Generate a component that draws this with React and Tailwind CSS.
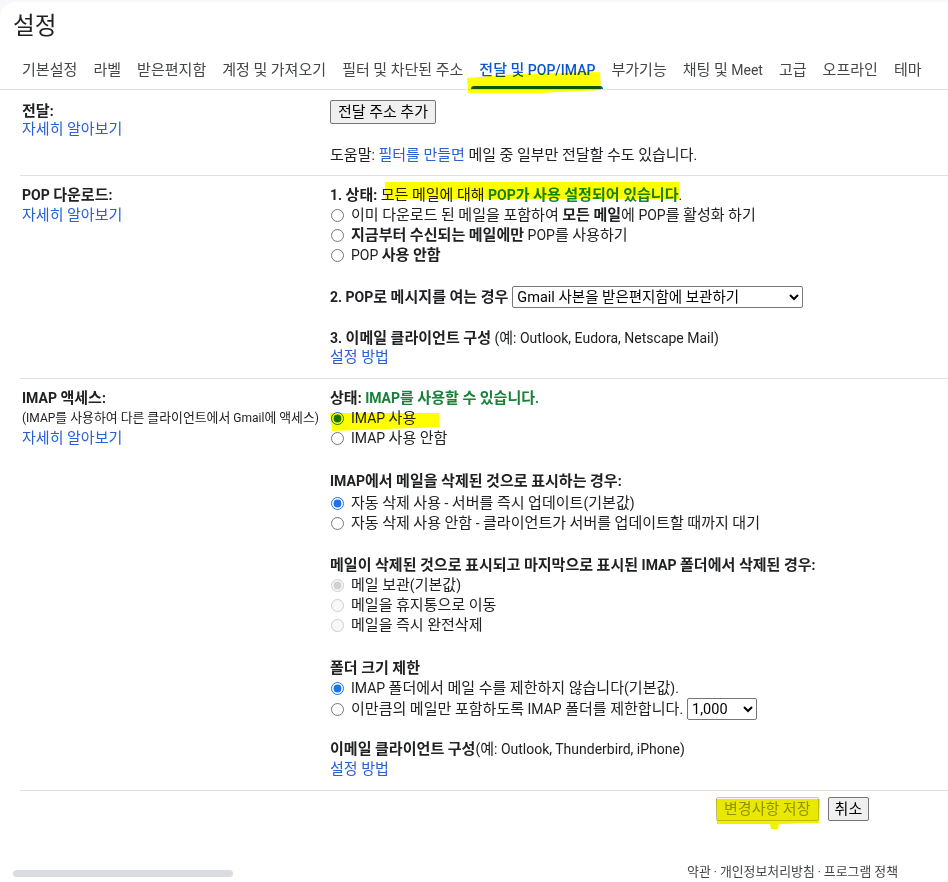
import React from 'react';

const tabs = ['기본설정', '라벨', '받은편지함', '계정 및 가져오기', '필터 및 차단된 주소', '전달 및 POP/IMAP', '부가기능', '채팅 및 Meet', '고급', '오프라인', '테마'];

// hangul in the CJK font runs a bit narrow next to Roboto, so bump hangul runs slightly
const HANGUL = /([\u1100-\u11FF\u3130-\u318F\uAC00-\uD7AF]+)/;

function kr(children) {
    return React.Children.map(children, (c) => {
        if (typeof c === 'string') {
            const parts = c.split(HANGUL);
            return parts.map((p, i) => (i % 2 ? <span key={i} className="text-[1.075em]">{p}</span> : p));
        }
        if (React.isValidElement(c)) {
            if (c.type === 'option' || c.type === 'select') return c;
            if (c.props.children != null) return React.cloneElement(c, undefined, kr(c.props.children));
        }
        return c;
    });
}

function Radio({ name, checked, disabled, children }) {
    return (
        <label className="flex items-center h-[20px] whitespace-nowrap">
            <input
                type="radio"
                name={name}
                defaultChecked={checked}
                disabled={disabled}
                className="w-[13px] h-[13px] m-0 ml-[1px] mr-[7px] accent-[#1a73e8]"
            />
            <span>{children}</span>
        </label>
    );
}

function Link({ children, className = '' }) {
    return <div className={`text-[#2a5fd6] leading-[20px] ${className}`}>{children}</div>;
}

export default function App() {
    const page = (
        <div className="relative w-full h-[882px] overflow-hidden bg-[#f6f8fc] pt-[2px] text-[14px] text-[#202124] font-[Roboto,'Noto_Sans_CJK_KR',sans-serif]">
            <div className="h-[880px] bg-white rounded-tl-[16px] flex flex-col">
                {/* Title */}
                <div className="pl-[13px] pt-[9px] text-[22px] leading-[30px] text-[#1f1f1f]">설정</div>

                {/* Tabs */}
                <div className="flex h-[48px] pl-[14px] border-b border-[#e3e3e3]">
                    {tabs.map((t) => {
                        const active = t === '전달 및 POP/IMAP';
                        return (
                            <div key={t} className="relative h-full px-2 whitespace-nowrap">
                                <div className={`pt-[18px] leading-[20px] ${active ? 'text-[#0b57d0] font-medium' : 'text-[#444746]'}`}>{t}</div>
                                {active && <div className="absolute left-0 right-0 bottom-0 h-[3px] rounded-t-[3px] bg-[#0b57d0]" />}
                            </div>
                        );
                    })}
                </div>

                {/* Sections */}
                <div className="pl-[20px] leading-[20px]">
                    {/* 전달 */}
                    <div className="flex border-b border-[#e0e0e0]">
                        <div className="w-[310px] pl-[2px] pt-[11px]">
                            <div className="font-bold">전달:</div>
                            <Link className="-mt-[2px]">자세히 알아보기</Link>
                        </div>
                        <div className="flex-1 pt-[10px] pb-[10px]">
                            <button className="h-[24px] px-[7px] bg-[#efefef] border border-[#767676] rounded-[2px] text-black">전달 주소 추가</button>
                            <div className="mt-[21px]">
                                도움말: <span className="text-[#2a5fd6]">필터를 만들면</span> 메일 중 일부만 전달할 수도 있습니다.
                            </div>
                        </div>
                    </div>

                    {/* POP */}
                    <div className="flex border-b border-[#e0e0e0]">
                        <div className="w-[310px] pl-[2px] pt-[9px]">
                            <div className="font-bold">POP 다운로드:</div>
                            <Link>자세히 알아보기</Link>
                        </div>
                        <div className="flex-1 pt-[9px] pb-[11px]">
                            <div>
                                <span className="font-bold">1. 상태: </span>
                                <span>모든 메일에 대해 </span>
                                <span className="font-bold text-[#188038]">POP가 사용 설정되어 있습니다</span>.
                            </div>
                            <Radio name="pop">이미 다운로드 된 메일을 포함하여 <b>모든 메일</b>에 POP를 활성화 하기</Radio>
                            <Radio name="pop"><b>지금부터 수신되는 메일에만</b> POP를 사용하기</Radio>
                            <Radio name="pop">POP <b>사용 안함</b></Radio>
                            <div className="mt-[21px] flex items-center h-[22px]">
                                <span className="font-bold">2. POP로 메시지를 여는 경우</span>
                                <select className="ml-[4px] w-[291px] h-[22px] text-[14.5px] border border-[#767676] rounded-[2px] bg-white text-black">
                                    <option>Gmail 사본을 받은편지함에 보관하기</option>
                                </select>
                            </div>
                            <div className="mt-[20px]">
                                <span className="font-bold">3. 이메일 클라이언트 구성</span> (예: Outlook, Eudora, Netscape Mail)
                            </div>
                            <Link className="-mt-[1px]">설정 방법</Link>
                        </div>
                    </div>

                    {/* IMAP */}
                    <div className="flex border-b border-[#e0e0e0]">
                        <div className="w-[310px] pl-[2px] pt-[9px]">
                            <div className="font-bold">IMAP 액세스:</div>
                            <div className="text-[12px] leading-[20px] whitespace-nowrap">(IMAP를 사용하여 다른 클라이언트에서 Gmail에 액세스)</div>
                            <Link>자세히 알아보기</Link>
                        </div>
                        <div className="flex-1 pt-[9px] pb-[11px]">
                            <div>
                                <span className="font-bold">상태: </span>
                                <span className="font-bold text-[#188038]">IMAP를 사용할 수 있습니다.</span>
                            </div>
                            <Radio name="imap" checked>IMAP 사용</Radio>
                            <Radio name="imap">IMAP 사용 안함</Radio>

                            <div className="mt-[23px] font-bold">IMAP에서 메일을 삭제된 것으로 표시하는 경우:</div>
                            <div className="mt-[2px]">
                                <Radio name="exp" checked>자동 삭제 사용 - 서버를 즉시 업데이트(기본값)</Radio>
                                <Radio name="exp">자동 삭제 사용 안함 - 클라이언트가 서버를 업데이트할 때까지 대기</Radio>
                            </div>

                            <div className="mt-[22px] font-bold whitespace-nowrap">메일이 삭제된 것으로 표시되고 마지막으로 표시된 IMAP 폴더에서 삭제된 경우:</div>
                            <Radio name="del" checked disabled>메일 보관(기본값)</Radio>
                            <Radio name="del" disabled>메일을 휴지통으로 이동</Radio>
                            <Radio name="del" disabled>메일을 즉시 완전삭제</Radio>

                            <div className="mt-[23px] font-bold">폴더 크기 제한</div>
                            <Radio name="lim" checked>IMAP 폴더에서 메일 수를 제한하지 않습니다(기본값).</Radio>
                            <div className="flex items-center h-[22px]">
                                <Radio name="lim">이만큼의 메일만 포함하도록 IMAP 폴더를 제한합니다.</Radio>
                                <select className="ml-[4px] w-[70px] h-[22px] text-[14.5px] border border-[#767676] rounded-[2px] bg-white text-black">
                                    <option>1,000</option>
                                </select>
                            </div>

                            <div className="mt-[19px]">
                                <span className="font-bold">이메일 클라이언트 구성</span>(예: Outlook, Thunderbird, iPhone)
                            </div>
                            <Link>설정 방법</Link>
                        </div>
                    </div>

                    {/* Buttons */}
                    <div className="flex gap-[9px] pl-[696px] pt-[6px]">
                        <button disabled className="h-[24px] px-[7px] bg-[#f5f5f5] border border-[#c6c6c6] rounded-[2px] text-[#9a9a9a]">변경사항 저장</button>
                        <button className="h-[24px] px-[6px] bg-[#efefef] border border-[#767676] rounded-[2px] text-black">취소</button>
                    </div>
                </div>

                {/* Footer */}
                <div className="mt-auto flex justify-end pr-[50px] pb-[2px] text-[12px] leading-[16px] text-[#444746]">
                    <span>약관 · 개인정보처리방침 · 프로그램 정책</span>
                </div>
            </div>

            {/* horizontal scrollbar thumb */}
            <div className="absolute left-[13px] bottom-[5px] w-[220px] h-[7px] rounded-full bg-[#dadce0]" />

            {/* yellow highlighter marks */}
            <svg className="absolute left-0 top-0 pointer-events-none mix-blend-multiply" width="948" height="882">
                <polygon points="467,78 520,74 600,72 601,90 540,93 468,93" fill="#ffff00" />
                <rect x="385" y="182" width="294" height="17" fill="#ffff00" />
                <polygon points="330,413 439,413 440,427 332,431" fill="#ffff00" />
                <polygon points="716,799 820,799 819,823 779,824 778,829 771,829 770,824 717,824" fill="#f2f200" />
            </svg>
        </div>
    );
    return kr(page);
}
